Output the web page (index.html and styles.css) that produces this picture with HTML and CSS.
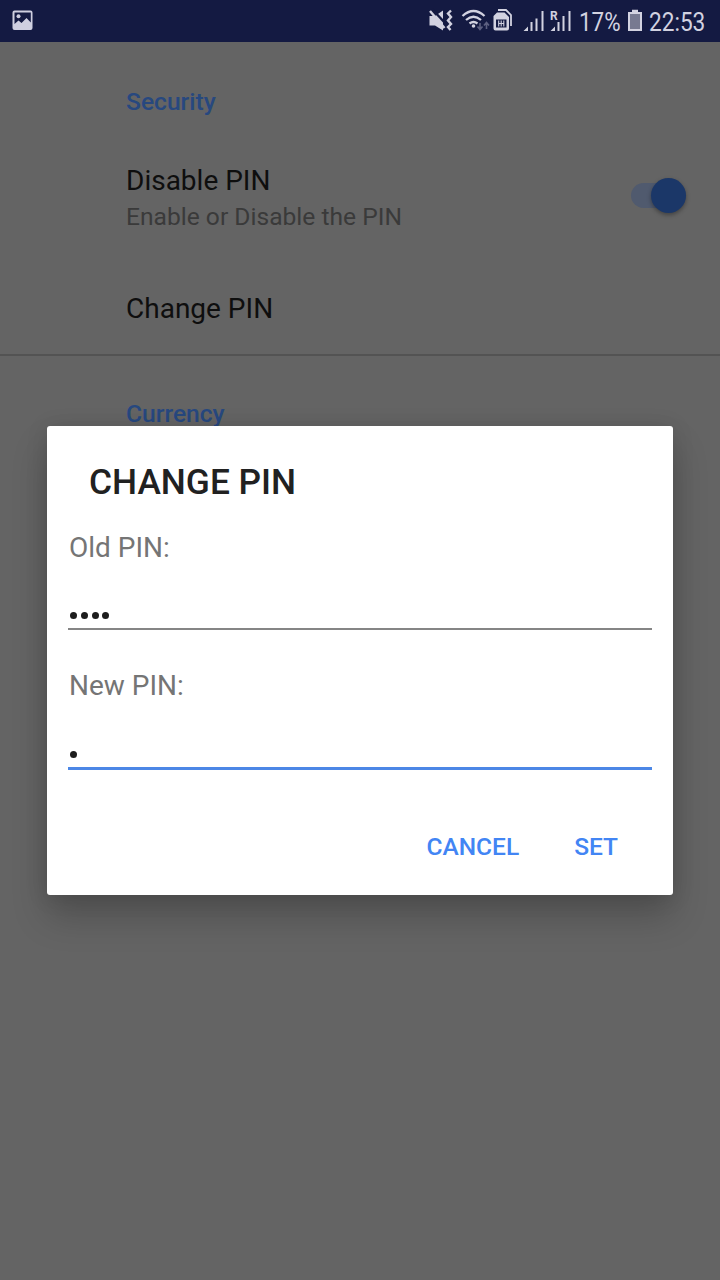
FILE: index.html
```html
<!DOCTYPE html>
<html lang="en">
<head>
<meta charset="utf-8">
<title>Settings</title>
<link rel="stylesheet" href="styles.css">
</head>
<body>
<header class="status">
  <svg class="picture" width="22" height="22" viewBox="0 0 22 22"><path fill="#cfcfe0" fill-rule="evenodd" d="M2.500 0.500H18.500Q20.500 .5 20.500 2.500V18Q20.500 20 18.500 20H2.500Q.5 20 .5 18V2.500Q.5 .5 2.500 .5ZM2.500 2.500V14L6.500 10.500L9.500 13L14.500 8L18.800 12.500V2.500Z"/><circle cx="6.500" cy="6.300" r="2" fill="#cfcfe0"/></svg>
  <svg class="icons" width="152" height="42" viewBox="424 0 152 42" fill="#d2d2e0">
    <path d="M429.500 16H435L443 10.500V30.500L435 25.500H429.500Z"/>
    <path d="M432 9L446 24" stroke="#141a42" stroke-width="2.500"/>
    <path d="M430 11L444.500 28" stroke="#d2d2e0" stroke-width="2.400"/>
    <path d="M451 10.500L448 13.500L451 17L448 20.500L451 24L448 27L450.500 30" fill="none" stroke="#d2d2e0" stroke-width="2.400"/>
    <path d="M462.500 16Q473.500 6 484.500 16M466 20Q473.500 13.500 481 20M469.500 23.500Q473.500 20.500 477.500 23.500" fill="none" stroke="#d2d2e0" stroke-width="2.300"/>
    <circle cx="473.500" cy="26" r="1.800"/>
    <path d="M480 23V29M477.500 26.500L480 29.500L482.500 26.500M486.500 29V23M484 25.500L486.500 22.500L489 25.500" fill="none" stroke="#5c5f80" stroke-width="1.600"/>
    <path d="M498 10H506L511 15V26" fill="none" stroke="#d2d2e0" stroke-width="1.800"/>
    <path fill-rule="evenodd" d="M497 12.500H504.500L509 17V28.500Q509 30.500 507 30.500H495.500Q493.500 30.500 493.500 28.500V16ZM496 19.500V27.500H506.500V19.500Z"/>
    <path d="M498.700 20.500V26.500M503.800 20.500V26.500M498.500 23.500H504M501.200 20.500V26.500" stroke="#d2d2e0" stroke-width="1.100"/>
    <path d="M523.500 31L528 26.500V31ZM530.500 22H532.500V31H530.500ZM535.500 18.500H537.500V31H535.500ZM541.500 11H543.500V31H541.500Z"/>
    <path d="M550.500 31L555 26.500V31ZM557.500 22H559.500V31H557.500ZM562.500 16H564.500V31H562.500ZM568.500 11H570.500V31H568.500Z"/>
    <text class="roaming" x="550" y="19.500">R</text>
  </svg>
  <span class="percent">17%</span>
  <svg class="battery" width="16" height="42" viewBox="627 0 16 42"><path fill="#d2d2e0" d="M628 12H632V9.800H638V12H642V31H628Z"/><path fill="#777a91" d="M630 14H640V29H630Z"/></svg>
  <span class="time">22:53</span>
</header>
<main class="settings">
  <section class="group">
    <h2 class="heading">Security</h2>
    <div class="row">
      <div>
        <div class="label">Disable PIN</div>
        <div class="summary">Enable or Disable the PIN</div>
      </div>
      <div class="switch"><div class="thumb"></div></div>
    </div>
    <div class="label change">Change PIN</div>
  </section>
  <section class="group">
    <h2 class="heading">Currency</h2>
  </section>
</main>
<div class="overlay">
  <div class="dialog">
    <h1 class="title">CHANGE PIN</h1>
    <div class="caption">Old PIN:</div>
    <div class="field"><i class="dot"></i><i class="dot"></i><i class="dot"></i><i class="dot"></i></div>
    <div class="caption second">New PIN:</div>
    <div class="field active"><i class="dot"></i></div>
    <div class="actions"><span class="action cancel">CANCEL</span><span class="action set">SET</span></div>
  </div>
</div>
</body>
</html>
```
FILE: styles.css
```css
* { box-sizing: border-box; }
body { margin: 0; height: 1280px; overflow: hidden; position: relative; background: #646464; font-family: Roboto, sans-serif; }
h1, h2 { margin: 0; }
svg { display: block; flex: none; }
.status { height: 42px; display: flex; background: #141a42; color: #d2d2e0; font-size: 26px; line-height: 44px; }
.picture { margin: 10px 0 0 12px; }
.icons { margin-left: 390px; }
.roaming { font: 700 12px Roboto, sans-serif; }
.percent { width: 48px; margin-left: 3px; transform: scaleX(.86); transform-origin: left; }
.time { margin-left: 6px; transform: scaleX(.87); transform-origin: left; }

/* Settings page, in its dimmed colours behind the dialog */
.group { height: 314px; padding: 43px 34px 0 126px; border-bottom: 2px solid #535353; }
.group + .group { padding-top: 41px; border: 0; }
.heading { font-size: 24.600px; line-height: 34px; font-weight: 500; color: #27487f; }
.row { display: flex; justify-content: space-between; align-items: center; margin-top: 44px; height: 72px; }
.label { font-size: 28px; line-height: 36px; color: #0e0e0e; }
.summary { font-size: 24.600px; line-height: 35px; color: #3a3a3a; }
.row .label { margin-top: -2px; }
.change { margin-top: 56px; }
.switch { width: 55px; height: 25px; margin-top: -7px; border-radius: 13px; background: #505a6e; display: flex; align-items: center; justify-content: flex-end; }
.thumb { width: 35px; height: 35px; border-radius: 50%; background: #1b3768; box-shadow: 0 2px 4px rgba(0,0,0,.35); }

.overlay { position: absolute; inset: 42px 0 0; display: flex; justify-content: center; align-items: center; }
.dialog { width: 626px; height: 469px; margin-bottom: 1px; padding: 35px 21px 0; background: #fff; border-radius: 3px; box-shadow: 0 22px 36px rgba(0,0,0,.2), 0 2px 22px rgba(0,0,0,.12); }
.title { margin-left: 21px; font-size: 35.300px; line-height: 42px; font-weight: 500; color: #212121; }
.caption { margin: 27px 0 0 1px; font-size: 28px; line-height: 36px; color: #757575; }
.field { height: 64px; padding: 46px 0 0 2px; display: flex; gap: 3.800px; border-bottom: 2px solid #858585; }
.dot { width: 7px; height: 7px; border-radius: 50%; background: #1d1d1d; }
.second { margin-top: 38px; }
.active { height: 66px; padding-top: 47px; border-bottom: 3px solid #4c87e6; }
.actions { display: flex; justify-content: flex-end; margin: 60px 34px 0 0; gap: 55px; }
.action { font-size: 24.500px; line-height: 34px; font-weight: 500; color: #4285f4; }
```
